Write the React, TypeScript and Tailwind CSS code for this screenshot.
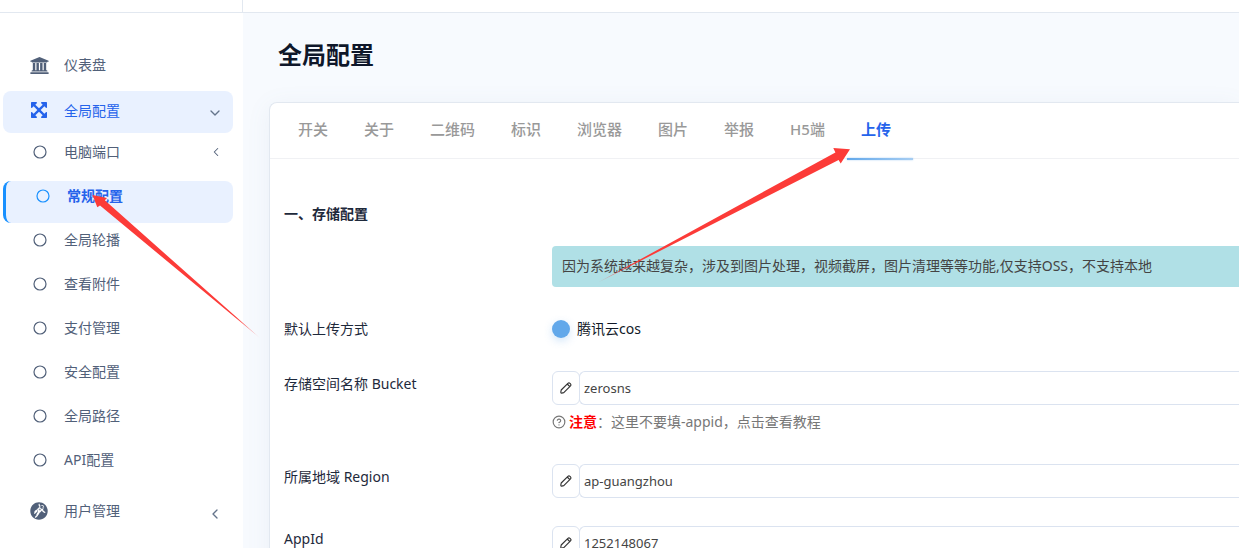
import type { ReactNode } from 'react';
import { ChevronDown, ChevronLeft, CircleQuestionMark } from 'lucide-react';
import { FaGrav } from 'react-icons/fa';

function BankIcon() {
  return (
    <svg viewBox="0 0 1920 1792" className="mb-0.5 h-[17px] w-[19px]" fill="currentColor" aria-hidden="true">
      <path d="M960 0l960 384v128h-128q0 26-20.5 45t-48.5 19h-1526q-28 0-48.5-19t-20.5-45h-128v-128zM256 640h256v768h128v-768h256v768h128v-768h256v768h128v-768h256v768h59q28 0 48.5 19t20.5 45v64h-1664v-64q0-26 20.5-45t48.5-19h59v-768zM1851 1600q28 0 48.5 19t20.5 45v128h-1920v-128q0-26 20.5-45t48.5-19h1782z" />
    </svg>
  );
}

function ArrowsIcon() {
  return (
    <svg viewBox="0 0 1536 1536" className="size-4" fill="currentColor" aria-hidden="true">
      <path d="M1283 413L928 768l355 355 144-144q29-31 70-14 39 17 39 59v448q0 26-19 45t-45 19h-448q-42 0-59-40-17-39 14-69l144-144-355-355-355 355 144 144q31 30 14 69-17 40-59 40H64q-26 0-45-19t-19-45v-448q0-42 40-59 39-17 69 14l144 144 355-355-355-355-144 144q-19 19-45 19-12 0-24-5-40-17-40-59V64q0-26 19-45T64 0h448q42 0 59 40 17 39-14 69L413 253l355 355 355-355-144-144q-31-30-14-69 17-40 59-40h448q26 0 45 19t19 45v448q0 42-39 59-13 5-25 5-26 0-45-19z" />
    </svg>
  );
}

function PencilIcon() {
  return (
    <svg viewBox="0 0 14 14" className="size-3.5" fill="none" stroke="currentColor" strokeWidth="1.15" strokeLinejoin="round" aria-hidden="true">
      <path d="M2.2 9 8.9 2.3a1.5 1.5 0 0 1 2.1 0l.5.5a1.5 1.5 0 0 1 0 2.1L4.8 11.6l-2.2.5a.7.7 0 0 1-.8-.9z M8.2 3l2.5 2.5" />
    </svg>
  );
}

function Ring() {
  return (
    <svg viewBox="0 0 14 14" className="size-3.5" fill="none" stroke="currentColor" strokeWidth="1.2" aria-hidden="true">
      <circle cx="7" cy="7" r="6" />
    </svg>
  );
}

function ParentItem({ icon, label, active, arrow }: { icon: ReactNode; label: string; active?: boolean; arrow?: ReactNode }) {
  return (
    <a
      href="#"
      className={`flex h-[42px] items-center rounded-lg pr-2.5 pl-6 ${active ? 'bg-[#e9f1ff] text-[#2563eb]' : 'text-[#516079]'}`}
    >
      <span className="flex w-6 justify-center">{icon}</span>
      <span className="ml-[13px] flex-1 pb-0.5">{label}</span>
      <span className="text-[#64748b]">{arrow}</span>
    </a>
  );
}

const subItems = ['电脑端口', '常规配置', '全局轮播', '查看附件', '支付管理', '安全配置', '全局路径', 'API配置'];

function Sidebar() {
  return (
    <nav className="flex w-[243px] shrink-0 flex-col gap-1 bg-white pt-8 pr-2.5 pl-[3px]">
      <ParentItem icon={<BankIcon />} label="仪表盘" />
      <ParentItem icon={<span className="pb-1"><ArrowsIcon /></span>} label="全局配置" active arrow={<ChevronDown className="mt-0.5 size-4" />} />
      <ul className="flex flex-col gap-0.5">
        {subItems.map((label, i) => (
          <li key={label}>
            <a
              href="#"
              className={`flex h-[42px] items-start rounded-lg pr-2.5 pl-[30px] leading-[30px] ${
                i === 1 ? 'border-l-[3px] border-[#1890ff] bg-[#e9f1ff] font-bold text-[#2563eb]' : 'text-[#516079]'
              }`}
            >
              <span className={`flex h-[30px] items-center ${i === 1 ? 'text-[#1890ff]' : ''}`}>
                <Ring />
              </span>
              <span className="ml-4 flex-1 pl-px">{label}</span>
              {i === 0 && (
                <span className="flex h-[30px] items-center">
                  <ChevronLeft className="size-3.5" strokeWidth={1.8} />
                </span>
              )}
            </a>
          </li>
        ))}
      </ul>
      <ParentItem icon={<FaGrav className="mb-0.5 size-[18px]" />} label="用户管理" arrow={<ChevronLeft className="mt-1 size-4" />} />
    </nav>
  );
}

const tabs = ['开关', '关于', '二维码', '标识', '浏览器', '图片', '举报', 'H5端', '上传'];

function Field({ id, label, value, children }: { id: string; label: string; value: string; children?: ReactNode }) {
  return (
    <div className="flex">
      <label htmlFor={id} className="w-[268px] shrink-0 pt-[3px] text-[#1e293b]">{label}</label>
      <div className="min-w-0 flex-1">
        <div className="flex h-[34px]">
          <button type="button" aria-label={`编辑 ${label}`} className="flex w-7 shrink-0 items-center justify-center rounded-md border border-[#dbe3f0] text-[#333]">
            <PencilIcon />
          </button>
          <input id={id} defaultValue={value} className="-ml-px min-w-0 flex-1 rounded-l-md border border-r-0 border-[#dbe3f0] px-1 text-[13px] text-[#444] outline-none" />
        </div>
        {children}
      </div>
    </div>
  );
}

function Annotations() {
  return (
    <svg width="1239" height="548" className="pointer-events-none absolute top-0 left-0" aria-hidden="true">
      <defs>
        <linearGradient id="fadeLeft" gradientUnits="userSpaceOnUse" x1="260" y1="338" x2="236" y2="317">
          <stop offset="0" stopColor="#fc3b38" stopOpacity="0.3" />
          <stop offset="1" stopColor="#fc3b38" />
        </linearGradient>
        <linearGradient id="fadeRight" gradientUnits="userSpaceOnUse" x1="598" y1="282" x2="630" y2="266">
          <stop offset="0" stopColor="#fc3b38" stopOpacity="0.3" />
          <stop offset="1" stopColor="#fc3b38" />
        </linearGradient>
      </defs>
      <polygon points="92.5,195 107,198 104.8,200.3 260.5,338.5 100,205.6 97.3,207.3" fill="url(#fadeLeft)" />
      <polygon points="850,149.3 833.3,148 835.4,152.4 598,282.5 838.6,160 840.7,163.5" fill="url(#fadeRight)" />
    </svg>
  );
}

export default function App() {
  return (
    <div className="relative flex h-screen flex-col overflow-hidden bg-[#f7fafe] font-['Noto_Sans','Noto_Sans_CJK_SC',sans-serif] text-sm leading-5">
      <header className="flex h-[13px] shrink-0 border-b border-[#e2e8f0] bg-white">
        <div className="w-[243px] border-r border-[#e2e8f0]" />
      </header>
      <div className="flex min-h-0 flex-1">
        <Sidebar />
        <main className="min-w-0 flex-1 pl-[26px]">
          <h1 className="pt-6 pl-[9px] text-2xl leading-9 font-bold text-[#0f172a]">全局配置</h1>
          <section className="mt-[29px] h-full rounded-tl-lg border-t border-l border-[#e2e8f0] bg-white shadow-[0_4px_24px_rgba(100,130,170,0.08)]">
            <div role="tablist" className="flex h-14 border-b border-[#f0f1f4] pl-3.5 text-[15px] font-medium">
              {tabs.map((tab) => {
                const active = tab === '上传';
                return (
                  <button
                    key={tab}
                    type="button"
                    role="tab"
                    aria-selected={active}
                    className={`relative flex items-start pt-4 pr-[22px] pl-3.5 ${active ? 'font-bold text-[#2563eb]' : 'text-[#999]'}`}
                  >
                    {tab}
                    {active && <span className="absolute inset-x-0 -bottom-0.5 h-0.5 bg-linear-to-r from-[#62a8ea] to-[#a6cdf2] shadow-[0_0_2px_#a6cdf2]" />}
                  </button>
                );
              })}
            </div>
            <form className="pl-3.5">
              <h2 className="pt-[45px] font-bold text-[#1e293b]">一、存储配置</h2>
              <div className="mt-[22px] flex flex-col gap-7">
                <p className="mb-1 ml-[268px] rounded-l bg-[#b0e0e6] px-2.5 pt-2.5 pb-[11px] text-[#444]">
                  因为系统越来越复杂，涉及到图片处理，视频截屏，图片清理等等功能,仅支持OSS，不支持本地
                </p>
                <div role="radiogroup" aria-labelledby="method" className="flex pb-1">
                  <span id="method" className="w-[268px] shrink-0 text-[#1e293b]">默认上传方式</span>
                  <label className="flex items-center gap-[7px] text-[#111827]">
                    <input type="radio" name="method" defaultChecked className="size-[18px] appearance-none rounded-full bg-[#62a8ea] shadow-[0_3px_8px_rgba(98,168,234,0.3)]" />
                    腾讯云cos
                  </label>
                </div>
                <Field id="bucket" label="存储空间名称 Bucket" value="zerosns">
                  <p className="flex items-center pt-1.5 pb-1 leading-[21px] text-[#777]">
                    <CircleQuestionMark className="mr-[3px] size-3.5" strokeWidth={2} />
                    <strong className="text-[#f00]">注意</strong>：这里不要填-appid，点击查看教程
                  </p>
                </Field>
                <Field id="region" label="所属地域 Region" value="ap-guangzhou" />
                <Field id="appid" label="AppId" value="1252148067" />
              </div>
            </form>
          </section>
        </main>
      </div>
      <Annotations />
    </div>
  );
}
